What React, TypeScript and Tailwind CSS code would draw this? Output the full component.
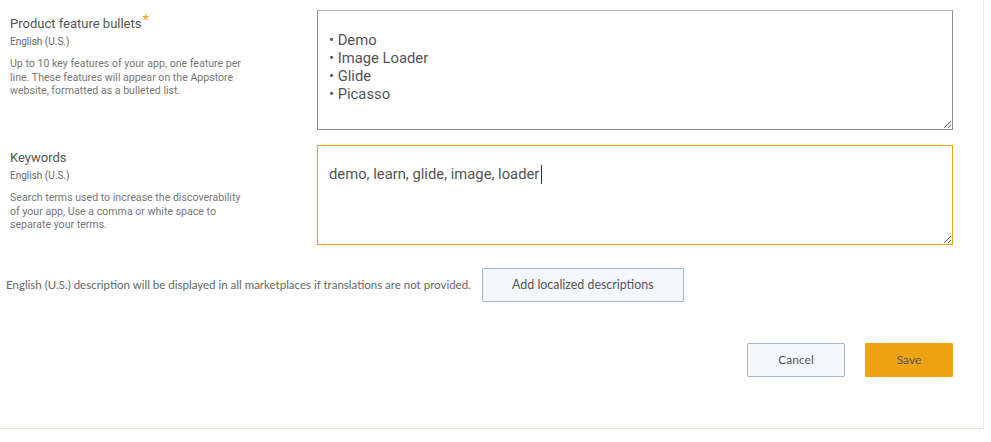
import React, { useState } from 'react'

const bullets = '\n• Demo\n• Image Loader\n• Glide\n• Picasso'

const FieldLabel: React.FC<{ title: string; required?: boolean; lines: string[] }> = ({ title, required, lines }) => (
  <div className="w-[317px] shrink-0 pl-[10px] pt-[5px] font-['Roboto',sans-serif]">
    <div className="text-[13px] leading-[16px] text-[#555]">
      {title}
      {required && <span className="ml-[1px] relative -top-[3px] text-[15px] text-[#eea315]">*</span>}
    </div>
    <div className="mt-[3px] text-[10px] leading-[14px] text-[#666]">English (U.S.)</div>
    <div className="mt-[8px] text-[10.6px] leading-[13.5px] text-[#777] whitespace-nowrap">
      {lines.map((l) => (
        <div key={l}>{l}</div>
      ))}
    </div>
  </div>
)

export default function App() {
  const [features, setFeatures] = useState(bullets)
  const [keywords, setKeywords] = useState('demo, learn, glide, image, loader')

  return (
    <div className="w-[991px] h-[442px] bg-white">
      <div className="w-[984px] h-[429px] border-r border-b border-[#ede8da] flex flex-col">
        {/* Feature bullets */}
        <div className="flex mt-[10px]">
          <FieldLabel
            title="Product feature bullets"
            required
            lines={[
              'Up to 10 key features of your app, one feature per',
              'line. These features will appear on the Appstore',
              'website, formatted as a bulleted list.',
            ]}
          />
          <textarea
            value={features}
            onChange={(e) => setFeatures(e.target.value)}
            className="w-[636px] h-[120px] border border-[#8f8f8f] border-t-[#b5b5b5] px-[11px] pt-[2px] font-['Roboto',sans-serif] text-[14.8px] leading-[18px] text-[#555] outline-none"
          />
        </div>

        {/* Keywords */}
        <div className="flex mt-[15px]">
          <FieldLabel
            title="Keywords"
            lines={[
              'Search terms used to increase the discoverability',
              'of your app, Use a comma or white space to',
              'separate your terms.',
            ]}
          />
          <div className="relative">
            <textarea
              value={keywords}
              onChange={(e) => setKeywords(e.target.value)}
              className="block w-[636px] h-[100px] border border-[#eea315] px-[11px] pt-[19px] font-['Roboto',sans-serif] text-[14.8px] leading-[18px] text-[#555] outline-none"
            />
            {/* text cursor */}
            <span className="absolute left-[224px] top-[20px] h-[19px] w-px bg-[#333]" />
          </div>
        </div>

        {/* Localization */}
        <div className="flex items-center mt-[23px] pl-[6px] font-['Lato',sans-serif]">
          <span className="text-[11.5px] text-[#666]">
            English (U.S.) description will be displayed in all marketplaces if translations are not provided.
          </span>
          <button className="ml-[11px] w-[202px] h-[34px] border border-[#a6b7d2] rounded-[1px] bg-[#f5f8fb] text-[12.4px] text-[#555]">
            Add localized descriptions
          </button>
        </div>

        {/* Actions */}
        <div className="flex justify-end mt-[41px] pr-[30px] font-['Lato',sans-serif]">
          <button className="w-[98px] h-[34px] border border-[#a6b7d2] rounded-[1px] bg-[#f5f8fb] text-[12px] text-[#555]">
            Cancel
          </button>
          <button className="ml-[20px] w-[88px] h-[34px] rounded-[1px] bg-[#eea315] text-[12px] text-[#555]">
            Save
          </button>
        </div>
      </div>
    </div>
  )
}
